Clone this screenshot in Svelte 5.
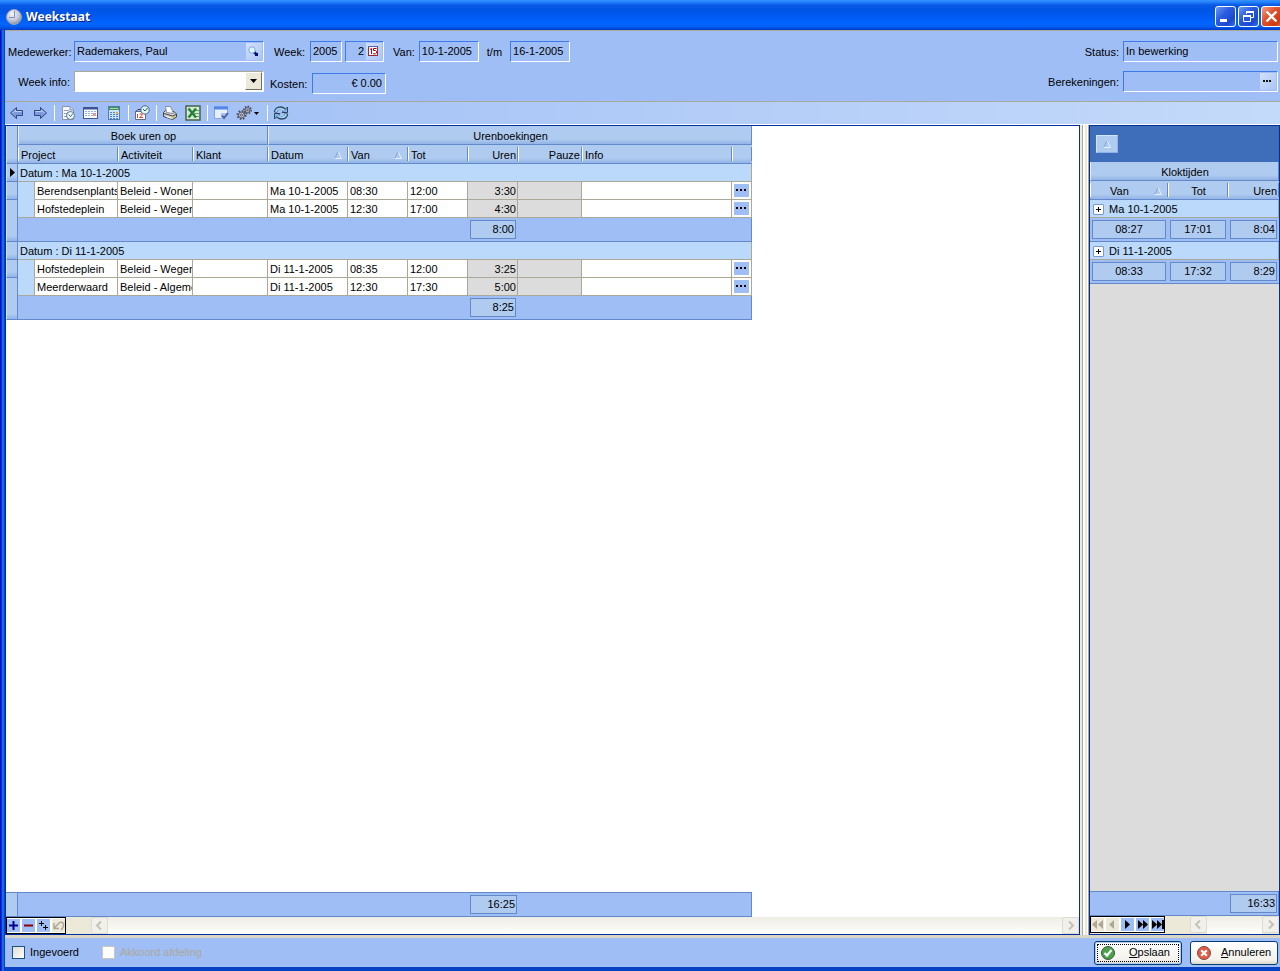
<script>
  const groups = [
    {
      date: 'Ma 10-1-2005',
      total: '8:00',
      current: true,
      rows: [
        { project: 'Berendsenplants', activity: 'Beleid - Wonen', from: '08:30', to: '12:00', hours: '3:30' },
        { project: 'Hofstedeplein', activity: 'Beleid - Wegen', from: '12:30', to: '17:00', hours: '4:30' }
      ]
    },
    {
      date: 'Di 11-1-2005',
      total: '8:25',
      current: false,
      rows: [
        { project: 'Hofstedeplein', activity: 'Beleid - Wegen', from: '08:35', to: '12:00', hours: '3:25' },
        { project: 'Meerderwaard', activity: 'Beleid - Algeme', from: '12:30', to: '17:30', hours: '5:00' }
      ]
    }
  ];

  const clock = [
    { date: 'Ma 10-1-2005', from: '08:27', to: '17:01', hours: '8:04' },
    { date: 'Di 11-1-2005', from: '08:33', to: '17:32', hours: '8:29' }
  ];
</script>

{#snippet sortMark()}
  <svg class="sort" width="8" height="9" viewBox="0 0 8 9" aria-hidden="true">
    <path d="M0.5 8 L4 0.5" stroke="#7fa3dc" fill="none" />
    <path d="M4 0.5 L7.5 7.5 H0.5" stroke="#e6f0fd" fill="none" />
  </svg>
{/snippet}

{#snippet chevron(d)}
  <svg width="15" height="15" viewBox="0 0 15 15" aria-hidden="true">
    <path {d} fill="none" stroke="#c4c2b6" stroke-width="2" />
  </svg>
{/snippet}

<div class="window">
  <header class="titlebar">
    <svg width="18" height="18" viewBox="0 0 18 18" aria-hidden="true">
      <defs>
        <radialGradient id="ball" cx=".4" cy=".3" r=".7">
          <stop offset="0" stop-color="#f4f6fa" />
          <stop offset=".6" stop-color="#c3cbdb" />
          <stop offset="1" stop-color="#8b93a8" />
        </radialGradient>
      </defs>
      <circle cx="9" cy="9" r="7.5" fill="url(#ball)" stroke="#9aa0b0" />
      <path d="M9.5 3 V9.5 H4" fill="none" stroke="#8391b4" />
    </svg>
    <h1>Weekstaat</h1>
    <div class="caption">
      <button aria-label="Minimaliseren">
        <svg width="19" height="19" viewBox="0 0 19 19"><path d="M4 12h7v3H4z" fill="#fff" /></svg>
      </button>
      <button aria-label="Herstellen">
        <svg width="19" height="19" viewBox="0 0 19 19" fill="none" stroke="#fff">
          <path d="M7.5 7 V4.5 H14.5 V10.500 H12" /><path d="M7 5h8" stroke-width="2" />
          <path d="M4.500 8.500 H11.500 V14.500 H4.500 Z" /><path d="M4 9h8" stroke-width="2" />
        </svg>
      </button>
      <button class="close" aria-label="Sluiten">
        <svg width="19" height="19" viewBox="0 0 19 19"><path d="M4.500 4.500 L14.500 14.500 M14.500 4.500 L4.500 14.500" stroke="#fff" stroke-width="2.300" /></svg>
      </button>
    </div>
  </header>

  <main class="client">
    <form class="filters" onsubmit={(e) => e.preventDefault()}>
      <div class="block person">
        <label for="employee">Medewerker:</label>
        <div class="field">
          <input id="employee" value="Rademakers, Paul" readonly />
          <button type="button" class="inset" aria-label="Medewerker zoeken">
            <svg width="15" height="17" viewBox="0 0 15 17">
              <path d="M8 9 L11 12" stroke="#00107c" stroke-width="2.500" />
              <path d="M9 10h3v3h-3z" fill="#00107c" />
              <circle cx="6" cy="7" r="3.200" fill="#d7f6ff" stroke="#86a9d8" />
            </svg>
          </button>
        </div>
        <label for="weekinfo">Week info:</label>
        <div class="combo">
          <select id="weekinfo"><option></option></select>
          <span class="drop" aria-hidden="true">
            <svg width="7" height="4" viewBox="0 0 7 4"><path d="M0 0h7L3.500 4z" fill="#000" /></svg>
          </span>
        </div>
      </div>

      <div class="period">
        <div class="line">
          <label class="lead" for="year">Week:</label>
          <div class="field year"><input id="year" value="2005" readonly /></div>
          <div class="field week">
            <input class="num" aria-label="Weeknummer" value="2" readonly />
            <button type="button" class="inset" aria-label="Kalender">
              <svg width="15" height="17" viewBox="0 0 15 17">
                <rect x="2.500" y="3.500" width="9" height="9" fill="#fff" stroke="#9c2b35" />
                <path d="M2 3.500h10" stroke="#5a64a8" />
                <path d="M4 6.500 L5.500 5.500 V11 M10.500 5.500 H7.500 V7.500 H9.500 L10.500 8.500 V10 L9.500 10.800 H7" fill="none" stroke="#b00010" />
              </svg>
            </button>
          </div>
          <label for="from">Van:</label>
          <div class="field date"><input id="from" value="10-1-2005" readonly /></div>
          <label class="till" for="until">t/m</label>
          <div class="field date"><input id="until" value="16-1-2005" readonly /></div>
        </div>
        <div class="line">
          <label class="lead" for="costs">Kosten:</label>
          <div class="field costs"><input id="costs" class="num" value="€ 0.00" readonly /></div>
        </div>
      </div>

      <div class="block state">
        <label for="status">Status:</label>
        <div class="field"><input id="status" value="In bewerking" readonly /></div>
        <label for="calc">Berekeningen:</label>
        <div class="field">
          <input id="calc" value="" readonly />
          <button type="button" class="inset" aria-label="Berekeningen tonen">
            <svg width="15" height="17" viewBox="0 0 15 17"><path d="M3 7h2v2H3zM6 7h2v2H6zM9 7h2v2H9z" fill="#111" /></svg>
          </button>
        </div>
      </div>
    </form>

    <div class="toolbar" role="toolbar" aria-label="Werkbalk">
      <button aria-label="Vorige week">
        <svg width="16" height="16" viewBox="0 0 16 16">
          <path d="M1.500 8 L7.500 2.500 V5.500 H13.500 V10.500 H7.500 V13.500 Z" fill="#7d9bdc" stroke="#34457f" />
          <path d="M3.500 8 L6.500 5 V6.500 H12.500" fill="none" stroke="#b9d2f8" />
        </svg>
      </button>
      <button aria-label="Volgende week">
        <svg width="16" height="16" viewBox="0 0 16 16">
          <path d="M14.500 8 L8.500 2.500 V5.500 H2.500 V10.500 H8.500 V13.500 Z" fill="#7d9bdc" stroke="#34457f" />
          <path d="M3.500 6.500 H9.500 V5 L12.500 8" fill="none" stroke="#b9d2f8" />
        </svg>
      </button>
      <i class="sep"></i>
      <button aria-label="Tijdformulier">
        <svg width="16" height="16" viewBox="0 0 16 16">
          <path d="M2.500 1.500 H10 L13.500 5 V14.500 H2.500 Z" fill="#f5f8ff" stroke="#8994b5" />
          <path d="M10 1.500 V5 H13.500" fill="#c9d5f0" stroke="#8994b5" />
          <path d="M4 5.500h5M4 8.500h4M4 11.500h3" stroke="#8fa3c4" />
          <circle cx="10.500" cy="10.500" r="4" fill="#e6f5fa" stroke="#5e7484" />
          <path d="M8.500 9.500 L10.500 11.500 L13 8.500" fill="none" stroke="#566" />
        </svg>
      </button>
      <button aria-label="Weekoverzicht">
        <svg width="16" height="16" viewBox="0 0 16 16">
          <rect x="0.500" y="2.500" width="14" height="11" fill="#fff" stroke="#4b5a86" />
          <path d="M1 3.500h13" stroke="#38539c" stroke-width="2" />
          <path d="M2 6.500h11M2 8.500h11M2 10.500h11" stroke="#8fb4e6" stroke-dasharray="2 1" />
          <path d="M10 8h3v3h-3z" fill="#e69a96" />
        </svg>
      </button>
      <button aria-label="Rekenmachine">
        <svg width="16" height="16" viewBox="0 0 16 16">
          <rect x="2.500" y="1.500" width="11" height="13" fill="#cfe4fb" stroke="#5579b6" />
          <path d="M3 2h10v3H3z" fill="#39955a" /><path d="M4 3.500h8" stroke="#a5dc9f" />
          <path d="M4 7.500h8M4 9.500h8M4 11.500h8M4 13.500h8" stroke="#4484d2" stroke-dasharray="2 1" />
          <path d="M10 7h2v2h-2z" fill="#e8ad32" />
        </svg>
      </button>
      <i class="sep"></i>
      <button aria-label="Kloktijden overnemen">
        <svg width="16" height="16" viewBox="0 0 16 16">
          <path d="M1.500 6.500 H11.500 V14.500 H1.500 Z" fill="#fff" stroke="#636989" />
          <path d="M2 6.500 L4 4.500 H8" fill="none" stroke="#303858" />
          <path d="M3.500 9 V13 M5.500 9 H8 V10.500 L5.500 12.500 H9" fill="none" stroke="#e4472f" />
          <circle cx="11" cy="5" r="4.200" fill="#d9f3fb" stroke="#4d6379" />
          <path d="M9 4 L11 6 L13.500 3" fill="none" stroke="#455" />
        </svg>
      </button>
      <i class="sep"></i>
      <button aria-label="Afdrukken">
        <svg width="16" height="16" viewBox="0 0 16 16">
          <path d="M1.500 7.500 L3.500 5.500 L12 6.500 L14.500 9 V12 L10.500 14.500 L1.500 11.500 Z" fill="#d4d3cf" stroke="#44444c" />
          <path d="M4.500 7.500 L3.500 1.500 H8.500 L11.500 8.500 Z" fill="#fff" stroke="#8a8f9f" />
          <path d="M2 8.500 L10.500 11 L14 9.500" fill="none" stroke="#44444c" />
          <path d="M4 11.500 L9.500 13.500" stroke="#fff" /><path d="M11 12h2" stroke="#c8c332" stroke-width="2" />
        </svg>
      </button>
      <button aria-label="Exporteren naar Excel">
        <svg width="16" height="16" viewBox="0 0 16 16">
          <rect x="1" y="1" width="14" height="14" fill="#d5ead2" stroke="#46624c" stroke-width="1.500" />
          <path d="M9 5.500h5M9 8.500h5M9 11.500h5" stroke="#67a06c" />
          <path d="M3.500 3.500 L11 12.500 M11 3.500 L3.500 12.500" stroke="#27803a" stroke-width="2.500" />
        </svg>
      </button>
      <i class="sep"></i>
      <button aria-label="Weergave aanpassen">
        <svg width="16" height="16" viewBox="0 0 16 16">
          <rect x="1.500" y="1.500" width="13" height="12" fill="#e4efff" stroke="#86a4e5" />
          <path d="M1 3h14" stroke="#5587ea" stroke-width="3" />
          <path d="M8 8h7v7H8z" fill="#a9c2f0" />
          <path d="M9 10.500 L11 13 L15 8" fill="none" stroke="#4b62a4" stroke-width="2" />
        </svg>
      </button>
      <button class="wide" aria-label="Instellingen">
        <svg width="16" height="16" viewBox="0 0 16 16">
          <circle cx="5.500" cy="10" r="4" fill="none" stroke="#4f5163" stroke-width="2" stroke-dasharray="1.600 1.500" />
          <circle cx="5.500" cy="10" r="3" fill="#c3c5d2" stroke="#4f5163" />
          <circle cx="5.500" cy="10" r="1" fill="#eef" stroke="#4f5163" />
          <circle cx="11.500" cy="5" r="3.500" fill="none" stroke="#4f5163" stroke-width="2" stroke-dasharray="1.400 1.300" />
          <circle cx="11.500" cy="5" r="2.500" fill="#c3c5d2" stroke="#4f5163" />
          <circle cx="11.500" cy="5" r="0.800" fill="#eef" stroke="#4f5163" />
        </svg>
        <svg width="5" height="3" viewBox="0 0 5 3"><path d="M0 0h5L2.500 3z" fill="#000" /></svg>
      </button>
      <i class="sep"></i>
      <button aria-label="Vernieuwen">
        <svg width="16" height="16" viewBox="0 0 16 16" fill="none">
          <path d="M2.500 7.500 C3 2.500 9 1.500 12 5.500" stroke="#2c4560" stroke-width="3.500" />
          <path d="M13.500 8.500 C13 13.500 7 14.500 4 10.500" stroke="#2c4560" stroke-width="3.500" />
          <path d="M9 7.500 H14.500 V2 Z" fill="#7fb5e6" stroke="#2c4560" />
          <path d="M7 8.500 H1.500 V14 Z" fill="#7fb5e6" stroke="#2c4560" />
          <path d="M3 7 C3.500 3.500 8.500 2.500 11.500 5.500 M13 9 C12.500 12.500 7.500 13.500 4.500 10.500" stroke="#9fd0f4" stroke-width="2" />
        </svg>
      </button>
    </div>

    <div class="panes">
      <section class="grid" aria-label="Urenboekingen">
        <table>
          <colgroup>
            <col class="w-ind" /><col class="w-indent" /><col class="w-project" /><col class="w-act" /><col class="w-act" />
            <col class="w-date" /><col class="w-time" /><col class="w-time" /><col class="w-hours" /><col class="w-pause" />
            <col class="w-info" /><col class="w-more" />
          </colgroup>
          <thead>
            <tr class="band">
              <th class="ind" rowspan="2" aria-label="Rij"></th>
              <th colspan="4">Boek uren op</th>
              <th colspan="7">Urenboekingen</th>
            </tr>
            <tr class="cols">
              <th colspan="2">Project</th>
              <th>Activiteit</th>
              <th>Klant</th>
              <th><span class="sorted">Datum {@render sortMark()}</span></th>
              <th><span class="sorted">Van {@render sortMark()}</span></th>
              <th>Tot</th>
              <th class="r">Uren</th>
              <th class="r">Pauze</th>
              <th>Info</th>
              <th aria-label="Meer"></th>
            </tr>
          </thead>
          <tbody>
            {#each groups as group}
              <tr class="group">
                <td class="ind">
                  {#if group.current}
                    <svg width="5" height="9" viewBox="0 0 5 9"><path d="M0 0 L5 4.500 L0 9z" fill="#000" /></svg>
                  {/if}
                </td>
                <td colspan="11">Datum : {group.date}</td>
              </tr>
              {#each group.rows as row, i}
                <tr class="data" class:last={i === group.rows.length - 1}>
                  <td class="ind" rowspan={i === group.rows.length - 1 ? 2 : 1}></td>
                  <td class="indent"></td>
                  <td class="tight"><div>{row.project}</div></td>
                  <td class="tight"><div>{row.activity}</div></td>
                  <td></td>
                  <td>{group.date}</td>
                  <td>{row.from}</td>
                  <td>{row.to}</td>
                  <td class="calc r">{row.hours}</td>
                  <td class="calc"></td>
                  <td></td>
                  <td class="more">
                    <button aria-label="Details">
                      <svg width="15" height="13" viewBox="0 0 15 13"><path d="M2 5h2v2H2zM6 5h2v2H6zM10 5h2v2h-2z" fill="#000" /></svg>
                    </button>
                  </td>
                </tr>
              {/each}
              <tr class="sum">
                <td colspan="7"></td>
                <td><div class="box">{group.total}</div></td>
                <td colspan="3" class="end"></td>
              </tr>
            {/each}
          </tbody>
        </table>

        <div class="blank"></div>

        <div class="total">
          <span class="stub"></span>
          <div class="box">16:25</div>
        </div>

        <div class="scroll">
          <div class="nav compact">
            <button aria-label="Toevoegen"><svg width="13" height="13" viewBox="0 0 13 13"><path d="M2 6.500h9M6.500 2v9" stroke="#00008c" stroke-width="2" /></svg></button>
            <button aria-label="Verwijderen"><svg width="13" height="13" viewBox="0 0 13 13"><path d="M2 6.500h9" stroke="#8c0000" stroke-width="2" /></svg></button>
            <button aria-label="Kopie toevoegen"><svg width="13" height="13" viewBox="0 0 13 13"><path d="M2 4.500h5M4.500 2v5M6 8.500h5M8.500 6v5" stroke="#000" /></svg></button>
            <button class="off" aria-label="Ongedaan maken" disabled><svg width="13" height="13" viewBox="0 0 13 13"><path d="M2 4 V9.500 H7 M2.500 9 L6.500 4.500 Q9 2 11.500 4.500 Q12 8 9 11" fill="none" stroke="#aca899" stroke-width="1.500" /></svg></button>
          </div>
          <span class="pad"></span>
          <button class="arrow" aria-label="Naar links" disabled>{@render chevron('M9 3.500 L5 7.500 L9 11.500')}</button>
          <span class="track"></span>
          <button class="arrow" aria-label="Naar rechts" disabled>{@render chevron('M6 3.500 L10 7.500 L6 11.500')}</button>
        </div>
      </section>

      <div class="splitter"></div>

      <section class="grid side" aria-label="Kloktijden">
        <div class="grouping"><button aria-label="Groepering">{@render sortMark()}</button></div>
        <table>
          <colgroup><col class="w-cfrom" /><col class="w-time" /><col /></colgroup>
          <thead>
            <tr class="band"><th colspan="3">Kloktijden</th></tr>
            <tr class="cols">
              <th class="c"><span class="sorted">Van {@render sortMark()}</span></th>
              <th class="c">Tot</th>
              <th class="r">Uren</th>
            </tr>
          </thead>
          <tbody>
            {#each clock as day}
              <tr class="group">
                <td colspan="3">
                  <button class="expand" aria-label="Uitklappen">
                    <svg width="9" height="9" viewBox="0 0 9 9"><path d="M2 4.500h5M4.500 2v5" stroke="#000" /></svg>
                  </button>
                  {day.date}
                </td>
              </tr>
              <tr class="sum">
                <td><div class="box c">{day.from}</div></td>
                <td><div class="box c">{day.to}</div></td>
                <td><div class="box">{day.hours}</div></td>
              </tr>
            {/each}
          </tbody>
        </table>

        <div class="blank"></div>

        <div class="total"><div class="box">16:33</div></div>

        <div class="scroll">
          <div class="nav">
            <button class="off" aria-label="Eerste" disabled><svg width="13" height="13" viewBox="0 0 13 13"><path d="M6 2 V11 L1 6.500zM12 2 V11 L7 6.500z" fill="#aca899" /></svg></button>
            <button class="off" aria-label="Vorige" disabled><svg width="13" height="13" viewBox="0 0 13 13"><path d="M8 2 V11 L3 6.500z" fill="#aca899" /></svg></button>
            <button aria-label="Volgende"><svg width="13" height="13" viewBox="0 0 13 13"><path d="M4 2 V11 L9 6.500z" fill="#000" /></svg></button>
            <button aria-label="Volgende pagina"><svg width="13" height="13" viewBox="0 0 13 13"><path d="M2 2 V11 L7 6.500zM7 2 V11 L12 6.500z" fill="#000" /></svg></button>
            <button aria-label="Laatste"><svg width="13" height="13" viewBox="0 0 13 13"><path d="M1 2 V11 L6 6.500zM6 2 V11 L11 6.500zM11 2h2v9h-2z" fill="#000" /></svg></button>
          </div>
          <span class="pad"></span>
          <button class="arrow" aria-label="Naar links" disabled>{@render chevron('M9 3.500 L5 7.500 L9 11.500')}</button>
          <span class="track"></span>
          <button class="arrow" aria-label="Naar rechts" disabled>{@render chevron('M6 3.500 L10 7.500 L6 11.500')}</button>
        </div>
      </section>
    </div>

    <footer class="actions">
      <label><input type="checkbox" /> Ingevoerd</label>
      <label class="disabled"><input type="checkbox" disabled /> Akkoord afdeling</label>
      <button class="push default">
        <svg width="16" height="16" viewBox="0 0 16 16">
          <circle cx="8" cy="8" r="6.500" fill="#4aa24b" stroke="#3b5540" />
          <path d="M4.500 8 L7 10.500 L11.500 5" fill="none" stroke="#fff" stroke-width="2.200" />
        </svg>
        <span><u>O</u>pslaan</span>
      </button>
      <button class="push">
        <svg width="16" height="16" viewBox="0 0 16 16">
          <circle cx="8" cy="8" r="6.500" fill="#e65a44" stroke="#7d4a48" />
          <path d="M5.200 5.200 L10.800 10.800 M10.800 5.200 L5.200 10.800" stroke="#fff" stroke-width="2.200" />
        </svg>
        <span><u>A</u>nnuleren</span>
      </button>
    </footer>
  </main>
</div>

<style>
  :global(body) {
    margin: 0;
    background: #0b2fc4;
  }

  .window {
    --face: #9fbef5;
    --head: #afcbf0;
    --line: #6389c9;
    --tan: #aca899;
    --navy: #00309c;
    box-sizing: border-box;
    display: flex;
    flex-direction: column;
    min-height: 100vh;
    padding: 0 0 4px 5px;
    overflow: hidden;
    background: linear-gradient(90deg, #0014b4 0 1px, #0831d9 1px 2px, #166aee 2px 4px, #0842c4 4px);
    color: #000;
    font: 11px/13px "Liberation Sans", Arial, sans-serif;
  }

  .window *,
  .window *::before {
    box-sizing: border-box;
  }

  button,
  input,
  select {
    margin: 0;
    padding: 0;
    border: 0;
    border-radius: 0;
    background: none;
    color: inherit;
    font: inherit;
  }

  svg {
    display: block;
    flex: none;
  }

  .titlebar {
    display: flex;
    align-items: center;
    gap: 3px;
    height: 30px;
    margin-left: -5px;
    padding: 3px 0 0 5px;
    background: linear-gradient(#3a92ff, #2384fb 2px, #0a5ae6 5px, #0054e3 10px, #005cf6 18px, #0066ff 24px, #005af0 27px, #003cc8 30px);
    color: #fff;
  }

  .titlebar h1 {
    flex: 1;
    margin: 0;
    font: bold 12px/16px "Open Sans", "Noto Sans", sans-serif;
    text-shadow: 1px 1px 0 #0a1883;
  }

  .caption {
    display: flex;
    gap: 2px;
    margin-right: -2px;
  }

  .caption button {
    width: 21px;
    height: 21px;
    border: 1px solid #fff;
    border-radius: 3px;
    background: linear-gradient(135deg, #6d97f2, #2a5ce0 40%, #1a49cf 75%, #2f6df5);
  }

  .caption .close {
    background: linear-gradient(135deg, #f0a08a, #e2532f 40%, #cd3a12 80%, #e2603a);
  }

  .client {
    display: flex;
    flex: 1;
    flex-direction: column;
    border-top: 1px solid var(--tan);
    background: var(--face);
  }

  .filters {
    display: flex;
    align-items: flex-start;
    height: 71px;
    padding: 10px 2px 0 3px;
    border-bottom: 1px solid var(--tan);
  }

  .block {
    display: grid;
    align-items: center;
    gap: 9px 3px;
  }

  .block > label {
    padding: 2px 1px 0 0;
    text-align: right;
    white-space: nowrap;
  }

  .person {
    grid-template-columns: 63px 190px;
  }

  .state {
    grid-template-columns: auto 155px;
    margin-left: auto;
  }

  .field {
    display: flex;
    height: 21px;
    padding: 1px;
    border: 1px solid;
    border-color: #3d7bea #fff #fff #3d7bea;
  }

  .field input {
    flex: 1;
    width: 0;
    min-width: 0;
    height: 16px;
    padding: 0 1px;
  }

  .num,
  .r {
    text-align: right;
  }

  .field .num {
    padding-right: 2px;
  }

  .inset {
    width: 16px;
    height: 17px;
    background: linear-gradient(135deg, #d3e1fa, #a9c4f6);
  }

  .combo {
    position: relative;
    height: 21px;
    border: 1px solid;
    border-color: var(--tan) #fff #fff var(--tan);
    background: #fff;
  }

  .combo select {
    width: 100%;
    height: 100%;
    appearance: none;
  }

  .drop {
    position: absolute;
    inset: 0 1px 1px auto;
    display: grid;
    place-items: center;
    width: 17px;
    border: 1px solid;
    border-color: #fff #716f64 #716f64 #fff;
    background: #ece9d8;
    pointer-events: none;
  }

  .period {
    display: grid;
    gap: 11px;
    margin-left: 6px;
  }

  .line {
    display: flex;
    align-items: center;
  }

  .line label {
    padding: 2px 4px 0 9px;
  }

  .line .lead {
    width: 40px;
    padding: 2px 5px 0 0;
    text-align: right;
  }

  .line .till {
    padding: 2px 8px 0 8px;
  }

  .line .year {
    width: 32px;
    margin-right: 3px;
  }

  .line .week {
    width: 39px;
  }

  .line .date {
    width: 60px;
  }

  .line .costs {
    width: 74px;
    margin-left: 2px;
  }

  .toolbar {
    display: flex;
    align-items: center;
    height: 23px;
    padding-left: 1px;
    border-bottom: 1px solid #fff;
    background: linear-gradient(90deg, #9ebdf5, #c4dafa);
  }

  .toolbar button {
    display: flex;
    align-items: center;
    gap: 2px;
    width: 23px;
    height: 22px;
    padding-left: 3px;
  }

  .toolbar .wide {
    width: 32px;
  }

  .sep {
    width: 5px;
    height: 16px;
    background: linear-gradient(90deg, transparent 2px, #fff 2px 3px, transparent 3px);
  }

  .panes {
    display: flex;
    flex: 1;
    border-bottom: 3px solid #d8d5c6;
  }

  .grid {
    display: flex;
    flex: 1;
    flex-direction: column;
    min-width: 0;
    border: 1px solid var(--navy);
    background: #fff;
  }

  .side {
    flex: 0 0 191px;
    background: #dcdcdc;
  }

  .splitter {
    width: 9px;
    background: linear-gradient(90deg, #ece9d8 0 2px, #aca899 2px 3px, #fff 3px 5px, #ece9d8 5px 7px, #fff 7px 8px, #aca899 8px);
  }

  table {
    width: 746px;
    border-spacing: 0;
    table-layout: fixed;
  }

  .side table {
    width: 100%;
  }

  .w-ind { width: 12px; }
  .w-indent { width: 17px; }
  .w-project { width: 83px; }
  .w-act { width: 75px; }
  .w-date { width: 80px; }
  .w-time { width: 60px; }
  .w-hours { width: 50px; }
  .w-pause { width: 64px; }
  .w-info { width: 150px; }
  .w-more { width: 20px; }
  .w-cfrom { width: 78px; }

  th,
  td {
    height: 18px;
    padding: 2px 2px 0;
    overflow: hidden;
    line-height: 13px;
    white-space: nowrap;
  }

  th {
    height: 19px;
    padding: 2px 2px 0 3px;
    border-bottom: 1px solid var(--line);
    background: linear-gradient(var(--head) 13px, #93b4e6);
    font-weight: normal;
    text-align: left;
  }

  .band th {
    border-right: 1px solid var(--line);
    border-left: 1px solid #e4eefc;
    text-align: center;
  }

  .cols th {
    background:
      linear-gradient(#fff, #fff) 0 2px / 1px 14px no-repeat,
      linear-gradient(var(--line), var(--line)) 100% 2px / 1px 14px no-repeat,
      linear-gradient(var(--head) 13px, #93b4e6);
  }

  th.r {
    text-align: right;
  }

  th.c {
    text-align: center;
  }

  .sorted {
    display: flex;
    align-items: center;
    justify-content: space-between;
    padding-right: 4px;
  }

  .c .sorted {
    padding: 0 4px 0 17px;
  }

  .ind,
  .band .ind {
    padding: 0 3px;
    border-right: 1px solid var(--line);
    border-bottom: 1px solid var(--line);
    border-left: 1px solid #d3e3fa;
    background: linear-gradient(var(--head) calc(100% - 5px), #8fb2e8);
  }

  .group td {
    background-color: #bbd9fb;
    border-bottom: 1px solid var(--tan);
  }

  .group td:last-child {
    border-right: 1px solid var(--tan);
  }

  .group .ind {
    border-bottom-color: var(--line);
  }

  .data td:not(.ind) {
    border-right: 1px solid var(--tan);
    border-bottom: 1px solid var(--tan);
    background: #fff;
  }

  .data .indent:not(.ind) {
    border-bottom-color: #bbd9fb;
    background: #bbd9fb;
  }

  .last .indent:not(.ind) {
    border-bottom-color: var(--tan);
  }

  .data .calc:not(.ind) {
    background: #dcdcdc;
  }

  .data .calc.r {
    padding-right: 1px;
  }

  .data .tight {
    padding-right: 0;
  }

  .tight div {
    overflow: hidden;
  }

  .data .more {
    padding: 0 2px;
  }

  .more button {
    display: block;
    width: 15px;
    height: 13px;
    background: var(--face);
  }

  .sum td {
    height: 24px;
    padding: 0 2px;
    border-bottom: 1px solid var(--line);
    background-color: var(--face);
  }

  .sum .end {
    border-right: 1px solid var(--line);
  }

  .box {
    width: 100%;
    height: 19px;
    padding: 2px 1px;
    border: 1px solid var(--line);
    background: var(--head);
    text-align: right;
  }

  .box.c {
    text-align: center;
  }

  .blank {
    flex: 1;
  }

  .total {
    display: flex;
    align-items: center;
    width: 746px;
    height: 25px;
    border: solid var(--line);
    border-width: 1px 1px 1px 0;
    background: var(--face);
  }

  .total .box {
    width: 47px;
  }

  .stub {
    align-self: stretch;
    width: 12px;
    margin-right: 452px;
    border-right: 1px solid var(--line);
    background: var(--head);
  }

  .side .total {
    justify-content: flex-end;
    width: 100%;
    padding-right: 1px;
  }

  .scroll {
    display: flex;
    height: 17px;
    background: #ece9d8;
  }

  .side .scroll {
    height: 18px;
  }

  .nav {
    display: flex;
    align-items: center;
    gap: 2px;
    height: 17px;
    border: 1px solid #000;
    background: #fff;
  }

  .compact {
    gap: 2px;
  }

  .nav button {
    width: 13px;
    height: 13px;
    background: var(--face);
  }

  .nav .off {
    background: #ece9d8;
  }

  .pad {
    width: 25px;
  }

  .track {
    flex: 1;
    background: linear-gradient(#eeede5, #fefefb);
  }

  .arrow {
    width: 17px;
    height: 17px;
    border: 1px solid #dddcd0;
    border-radius: 2px;
    background: #f1f0ea;
  }

  .grouping {
    height: 36px;
    padding: 9px 6px;
    background: #3e6db9;
  }

  .grouping button {
    display: grid;
    place-items: center;
    width: 22px;
    height: 18px;
    border: 1px solid;
    border-color: #d3e3fa #8fb2e8 #8fb2e8 #d3e3fa;
    background: var(--head);
  }

  .side .group td {
    padding-left: 3px;
  }

  .expand {
    display: inline-block;
    width: 11px;
    height: 11px;
    margin-right: 2px;
    border: 1px solid #7b98c7;
    border-radius: 1px;
    background: #fff;
    vertical-align: -1px;
  }

  .actions {
    display: flex;
    align-items: center;
    gap: 23px;
    height: 29px;
    padding: 0 2px 0 7px;
  }

  .actions label {
    display: flex;
    align-items: center;
    gap: 5px;
  }

  .actions input {
    width: 13px;
    height: 13px;
    border: 1px solid #1c5180;
    background: linear-gradient(135deg, #dcdcd7, #fff);
    appearance: none;
  }

  .actions .disabled {
    color: var(--tan);
  }

  .disabled input {
    border-color: #cac8bb;
    background: #fff;
  }

  .push {
    display: flex;
    align-items: center;
    gap: 13px;
    width: 88px;
    height: 24px;
    padding-left: 5px;
    border: 1px solid #003c74;
    border-radius: 3px;
    background: linear-gradient(#fff, #f3f2ec 80%, #dcd8cb);
    white-space: nowrap;
  }

  .push + .push {
    gap: 9px;
    margin-left: -15px;
  }

  .default {
    margin-left: auto;
    box-shadow: inset 0 0 0 1px #b4cdf5;
    outline: 1px dotted #000;
    outline-offset: -4px;
  }
</style>
